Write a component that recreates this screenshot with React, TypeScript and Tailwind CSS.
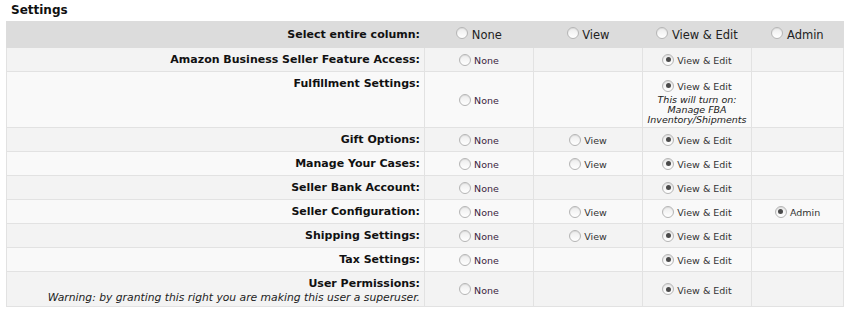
import React from "react";

type Perm = "None" | "View" | "View & Edit" | "Admin";

interface Row {
  label: string;
  warning?: string;
  options: Perm[];
  selected: Perm;
  note?: string[];
  h: string;
}

const rows: Row[] = [
  { label: "Amazon Business Seller Feature Access:", options: ["None", "View & Edit"], selected: "View & Edit", h: "h-[24px]" },
  {
    label: "Fulfillment Settings:",
    options: ["None", "View & Edit"],
    selected: "View & Edit",
    note: ["This will turn on:", "Manage FBA", "Inventory/Shipments"],
    h: "h-[56px]",
  },
  { label: "Gift Options:", options: ["None", "View", "View & Edit"], selected: "View & Edit", h: "h-[24px]" },
  { label: "Manage Your Cases:", options: ["None", "View", "View & Edit"], selected: "View & Edit", h: "h-[24px]" },
  { label: "Seller Bank Account:", options: ["None", "View & Edit"], selected: "View & Edit", h: "h-[24px]" },
  { label: "Seller Configuration:", options: ["None", "View", "View & Edit", "Admin"], selected: "Admin", h: "h-[24px]" },
  { label: "Shipping Settings:", options: ["None", "View", "View & Edit"], selected: "View & Edit", h: "h-[24px]" },
  { label: "Tax Settings:", options: ["None", "View & Edit"], selected: "View & Edit", h: "h-[24px]" },
  {
    label: "User Permissions:",
    warning: "Warning: by granting this right you are making this user a superuser.",
    options: ["None", "View & Edit"],
    selected: "View & Edit",
    h: "h-[35px]",
  },
];

const cols: Perm[] = ["None", "View", "View & Edit", "Admin"];

function Radio({ checked }: { checked?: boolean }) {
  return (
    <span className="relative -top-[2px] inline-flex h-[12px] w-[12px] items-center justify-center rounded-full border border-[#b5b5b5] bg-gradient-to-b from-[#ececec] to-[#ffffff] align-middle shadow-[inset_0_1px_1px_rgba(0,0,0,0.08)]">
      {checked && <span className="h-[5px] w-[5px] rounded-full bg-[#4a4a4a]" />}
    </span>
  );
}

export default function App() {
  return (
    <div className="w-[850px] h-[314px] bg-white font-['DejaVu_Sans',Verdana,sans-serif] text-[#111]">
      <div className="pl-[11px] pt-[3px] h-[21px] text-[12px] font-bold leading-[15px]">Settings</div>
      <table className="ml-[6px] w-[837px] table-fixed border-collapse">
        <colgroup>
          <col className="w-[418px]" />
          <col className="w-[109px]" />
          <col className="w-[109px]" />
          <col className="w-[109px]" />
          <col className="w-[92px]" />
        </colgroup>
        <tbody>
          <tr className="h-[26px] bg-[#dcdcdc]">
            <td className="border border-[#dcdcdc] pr-[4px] pt-[2px] text-right text-[11px] font-bold">Select entire column:</td>
            {cols.map((c) => (
              <td key={c} className="border border-[#dcdcdc] pt-[2px] text-center text-[11.5px] text-[#222]">
                <Radio /> <span>{c}</span>
              </td>
            ))}
          </tr>
          {rows.map((r, i) => (
            <tr key={r.label} className={`${r.h} ${i % 2 === 0 ? "bg-[#f3f3f3]" : "bg-[#f9f9f9]"}`}>
              <td className="border border-[#e2e2e2] pr-[4px] pt-[4px] align-top text-right text-[11px] font-bold leading-[15px]">
                {r.label}
                {r.warning && (
                  <div className="text-[10.75px] font-normal italic leading-[14px] text-[#222]">{r.warning}</div>
                )}
              </td>
              {cols.map((c) => (
                <td key={c} className="border border-[#e2e2e2] pt-[4px] text-center align-middle text-[9.5px] leading-[11px] text-[#333]">
                  {r.options.includes(c) && (
                    <div className={c === r.selected && r.note ? "pt-[3px]" : ""}>
                      <Radio checked={r.selected === c} /> <span className={c === "None" ? "text-[#3a2340]" : ""}>{c}</span>
                      {c === r.selected && r.note && (
                        <div className="pt-[1px] italic leading-[10px] text-[#222]">
                          {r.note.map((n) => (
                            <div key={n}>{n}</div>
                          ))}
                        </div>
                      )}
                    </div>
                  )}
                </td>
              ))}
            </tr>
          ))}
        </tbody>
      </table>
    </div>
  );
}
